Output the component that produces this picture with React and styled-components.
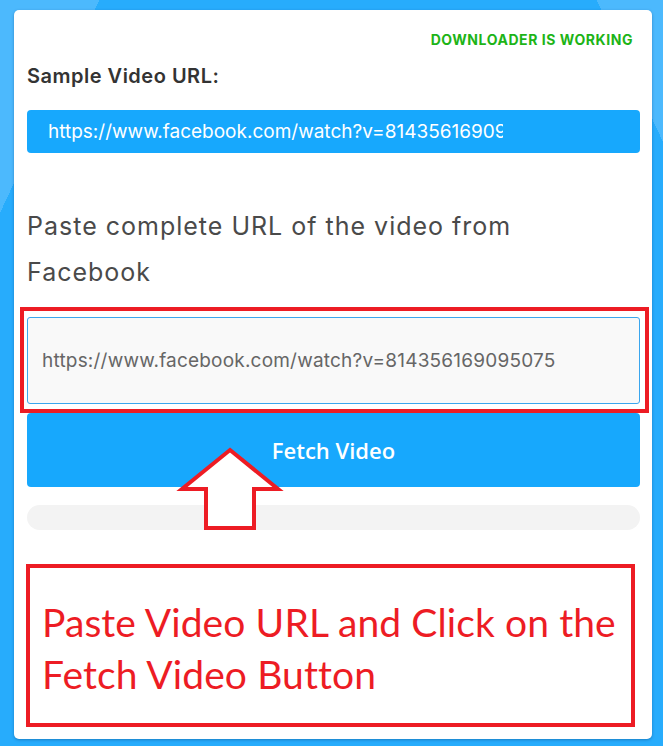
import React from "react";
import styled, { createGlobalStyle } from "styled-components";

const GlobalStyle = createGlobalStyle`
  html, body {
    margin: 0;
    padding: 0;
  }
  body {
    width: 663px;
    height: 746px;
    overflow: hidden;
    font-family: "Inter", "Noto Sans", sans-serif;
    background-color: #27acfc;
    background-image:
      linear-gradient(115deg, #4cb9fd 0, #4cb9fd 90px, transparent 90px),
      linear-gradient(245deg, #4cb9fd 0, #4cb9fd 60px, transparent 60px);
    background-repeat: no-repeat;
  }
`;

export const Page = styled.div`
  padding: 10px 11px 7px 14px;
  box-sizing: border-box;
  height: 746px;
`;

export const Card = styled.div`
  position: relative;
  background: #fff;
  border-radius: 5px;
  box-shadow: 0 1px 3px rgba(0, 40, 90, 0.35);
  height: 729px;
  box-sizing: border-box;
  padding: 20px 12px 0 13px;
  display: flex;
  flex-direction: column;
`;

export const Status = styled.div`
  text-align: right;
  padding-right: 7px;
  color: #1db417;
  font-size: 14px;
  font-weight: 700;
  line-height: 20px;
  letter-spacing: 0.55px;
`;

export const Label = styled.div`
  margin-top: 13px;
  color: #333;
  font-size: 20px;
  font-weight: 600;
  line-height: 26px;
  letter-spacing: 0.5px;
`;

export const SampleBox = styled.div`
  margin-top: 21px;
  height: 43px;
  border-radius: 4px;
  background: #17a8fd;
  display: flex;
  align-items: center;
  padding-left: 21px;
`;

export const SampleText = styled.div`
  width: 455px;
  overflow: hidden;
  white-space: nowrap;
  color: #fff;
  font-size: 19px;
  line-height: 24px;
  letter-spacing: 0;
`;

export const Heading = styled.div`
  margin-top: 50px;
  color: #4a4a4a;
  font-size: 25px;
  font-weight: 400;
  line-height: 46px;
  letter-spacing: 1px;
`;

export const InputWrap = styled.div`
  position: relative;
  margin-top: 22px;
`;

export const UrlInput = styled.div`
  height: 87px;
  box-sizing: border-box;
  border: 1px solid #3aa6ee;
  border-radius: 3px;
  background: #f9f9f9;
  display: flex;
  align-items: center;
  padding-left: 14px;
  color: #666;
  font-size: 19px;
  letter-spacing: 0.2px;
  white-space: nowrap;
`;

export const Highlight = styled.div`
  position: absolute;
  left: -7px;
  right: -9px;
  top: -10px;
  bottom: -9px;
  border: 4px solid #ed1c24;
  pointer-events: none;
`;

export const FetchButton = styled.button`
  margin-top: 9px;
  height: 74px;
  border: none;
  border-radius: 4px;
  background: #17a8fd;
  color: #fff;
  font-family: "Open Sans", "Noto Sans", sans-serif;
  font-size: 22px;
  font-weight: 600;
  cursor: pointer;
`;

export const Progress = styled.div`
  margin-top: 18px;
  height: 25px;
  border-radius: 13px;
  background: #f3f3f3;
`;

export const NoteBox = styled.div`
  margin-top: 34px;
  margin-left: -1px;
  margin-right: 5px;
  height: 163px;
  box-sizing: border-box;
  border: 4px solid #ed1c24;
  display: flex;
  align-items: center;
  padding: 4px 0 0 12px;
  color: #ed1c24;
  font-family: "Lato", "Open Sans", sans-serif;
  font-size: 39px;
  line-height: 52px;
  letter-spacing: 0.1px;
`;

const ArrowSvg = styled.svg`
  position: absolute;
  left: 160px;
  top: 432px;
  overflow: visible;
  pointer-events: none;
`;

function UpArrow() {
  return (
    <ArrowSvg width="112" height="92" viewBox="160 432 112 92">
      <polygon
        points="216,440 264,479 240,479 240,518 192,518 192,479 168,479"
        fill="#fff"
        stroke="#ed1c24"
        strokeWidth="4"
        strokeLinejoin="miter"
      />
    </ArrowSvg>
  );
}

export default function App() {
  return (
    <>
      <GlobalStyle />
      <Page>
        <Card>
          <Status>DOWNLOADER IS WORKING</Status>
          <Label>Sample Video URL:</Label>
          <SampleBox>
            <SampleText>https://www.facebook.com/watch?v=814356169095075</SampleText>
          </SampleBox>
          <Heading>
            Paste complete URL of the video from
            <br />
            Facebook
          </Heading>
          <InputWrap>
            <UrlInput>https://www.facebook.com/watch?v=814356169095075</UrlInput>
            <Highlight />
          </InputWrap>
          <FetchButton>Fetch Video</FetchButton>
          <Progress />
          <NoteBox>
            Paste Video URL and Click on the
            <br />
            Fetch Video Button
          </NoteBox>
          <UpArrow />
        </Card>
      </Page>
    </>
  );
}
